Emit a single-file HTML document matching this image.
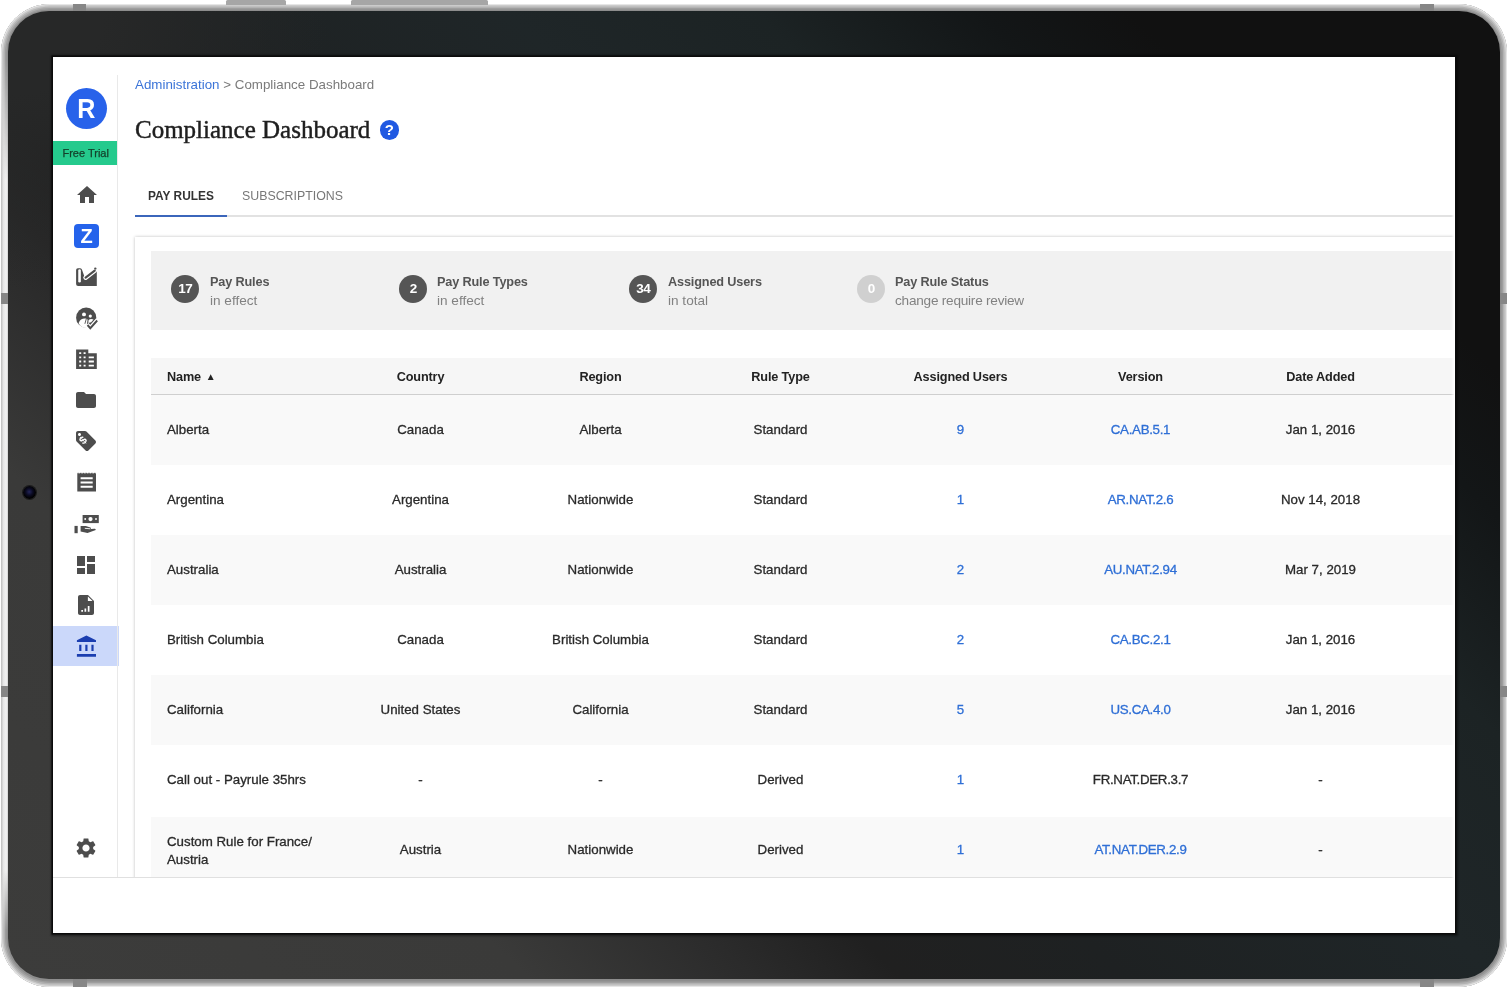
<!DOCTYPE html>
<html lang="en">
<head>
<meta charset="utf-8">
<title>Compliance Dashboard</title>
<style>
*{box-sizing:border-box;margin:0;padding:0}
html,body{width:1507px;height:987px;overflow:hidden;background:#fff}
body{position:relative;font-family:"Liberation Sans",Arial,sans-serif;color:#333}
/* ---------- tablet ---------- */
#frame{position:absolute;left:0.5px;top:3.5px;width:1506px;height:983px;border-radius:49px;background:#8d8d8d;
 box-shadow:inset 0 0 0 1px #e6e6e6,inset 0 0 0 2.5px #cbcbcb,inset 0 0 0 4px #b2b2b2,inset 0 0 0 5.5px #9e9e9e}
#bezel{position:absolute;left:8px;top:10.5px;width:1491.5px;height:968px;border-radius:41px;
 background:radial-gradient(ellipse 320px 280px at 0 0,#272828 0,#272828 30%,rgba(39,40,40,0) 100%),
 linear-gradient(44.24deg,#3c3c3b 0%,#3a3a39 21%,#2b2b2b 30%,#202020 36%,#1e2122 45%,#1f2628 60%,#1c2324 70%,#131617 79%,#111 85%,#111 100%)}
#lring{position:absolute;left:0.5px;top:60px;width:7.5px;height:870px;background:linear-gradient(90deg,#bcbcbc 0,#e6e6e6 35%,#f3f3f3 75%,#d0d0d0 100%);
 -webkit-mask-image:linear-gradient(180deg,transparent 0,#000 120px,#000 calc(100% - 60px),transparent 100%);mask-image:linear-gradient(180deg,transparent 0,#000 120px,#000 calc(100% - 60px),transparent 100%)}
#screen{will-change:transform;position:absolute;left:53px;top:57px;width:1401.5px;height:876.3px;background:#fff;overflow:hidden;box-shadow:0 0 0 1.5px #0b0b0b,0 0 2px 2.5px rgba(0,0,0,.45)}
.notch{position:absolute;background:#868686}
.btn{position:absolute;background:#a6a6a6;top:0;height:4.5px;border-radius:1.5px 1.5px 0 0}
#cam{position:absolute;left:22.5px;top:485.8px;width:13px;height:13px;border-radius:50%;background:radial-gradient(circle at 48% 45%,#23255a 0,#0b0b22 35%,#000 65%);box-shadow:0 0 0 1px #1c1c1c}
/* ---------- app ---------- */
#side{position:absolute;left:0;top:0;width:65px;height:820px;background:#fff}
#side:after{content:"";position:absolute;right:0;top:18px;bottom:0;width:1px;background:#e9e9e9}
#logo{position:absolute;left:12.7px;top:31px;width:41px;height:41px;border-radius:50%;background:#2862ea;color:#fff;font-weight:bold;font-size:28.5px;line-height:41.5px;text-align:center}
#logo span{display:inline-block;transform:scaleX(.88)}
#trial{position:absolute;left:0;top:84.4px;width:65.4px;height:23.8px;background:#25ca8d;color:#14402b;font-size:11px;line-height:24.6px;-webkit-text-stroke:.25px #14402b;text-align:center;white-space:nowrap}
.ico{position:absolute;left:21px;width:24px;height:24px}
.ico svg{display:block;width:24px;height:24px;fill:#4d4d4d;overflow:visible}
#zb{position:absolute;left:21px;top:167.3px;width:25px;height:24px;border-radius:4px;background:#2563eb;color:#fff;font-weight:bold;font-size:20px;line-height:24px;text-align:center}
#active{position:absolute;left:0;top:569px;width:65.5px;height:40px;background:#cbd8fa}
#crumb{position:absolute;left:82px;top:20px;font-size:13.35px;line-height:15px;color:#7b7b7b;white-space:nowrap}
#crumb a{color:#3b74d8;text-decoration:none}
#title{position:absolute;left:82px;top:56.5px;font-family:"Liberation Serif","DejaVu Serif",serif;font-size:25px;line-height:32px;color:#1f1f1f;white-space:nowrap;-webkit-text-stroke:0.45px #1f1f1f}
#help{position:absolute;left:326.7px;top:63px;width:19.5px;height:19.5px;border-radius:50%;background:#2059e2;color:#fff;font-weight:bold;font-size:15px;line-height:19px;text-align:center}
.tab{position:absolute;top:130.6px;line-height:16px;font-size:13.7px;transform-origin:0 50%;white-space:nowrap;text-transform:uppercase}
#tabline{position:absolute;left:82px;top:158.3px;width:1330px;height:1.4px;background:#e2e2e2}
#tabsel{position:absolute;left:82px;top:157.5px;width:91.7px;height:2.8px;background:#3b66bb}
#card{position:absolute;left:82px;top:180.3px;width:1400px;height:760px;background:#fff;box-shadow:0 0 3px rgba(0,0,0,.26)}
#stats{position:absolute;left:16px;top:13.7px;width:1400px;height:79px;background:#f1f1f1}
.num{position:absolute;top:23.6px;width:28px;height:28px;border-radius:50%;background:#555;color:#fff;font-weight:bold;font-size:13.5px;letter-spacing:-.5px;line-height:28px;text-align:center}
.st{position:absolute;top:22.3px;font-size:13.6px;line-height:18.4px;white-space:nowrap;color:#828282}
.st b{color:#555;display:block;font-size:12.7px;letter-spacing:-.15px}
#thead{position:absolute;left:16px;top:120.7px;width:1400px;height:37.5px;background:#f6f6f6;border-bottom:1.3px solid #cfcfcf;font-weight:bold;font-size:12.7px;letter-spacing:-.15px;line-height:38.6px;color:#222}
.row{position:absolute;left:16px;width:1400px;height:70px;font-size:13.3px;color:#2a2a2a;-webkit-text-stroke:.3px}
.row.odd{background:#f9f9f9}
.c{position:absolute;top:0;width:180px;text-align:center;white-space:nowrap}
.row .c{line-height:inherit}
.c0{left:16px;width:200px;text-align:left}
.row .c5{letter-spacing:-.3px}
.c1{left:179.5px}.c2{left:359.5px}.c3{left:539.5px}.c4{left:719.5px}.c5{left:899.5px}.c6{left:1079.5px}
.lnk{color:#2f6fd6}
#rfade{position:absolute;right:0;top:0;width:3.5px;height:100%;background:linear-gradient(90deg,rgba(255,255,255,0),#fff 85%)}
#foot{position:absolute;left:0;top:819.6px;width:1402px;height:58px;background:#fff;border-top:1.5px solid #e0e0e0}
</style>
</head>
<body>
<div id="frame"></div>
<div id="lring"></div>
<div class="btn" style="left:226px;width:60px"></div>
<div class="btn" style="left:351px;width:137px"></div>
<div class="notch" style="left:73px;top:3.5px;width:13px;height:7px"></div>
<div class="notch" style="left:1420px;top:3.5px;width:13.5px;height:7px"></div>
<div class="notch" style="left:73px;top:978.5px;width:13.5px;height:8px"></div>
<div class="notch" style="left:1420px;top:978.5px;width:13.5px;height:8px"></div>
<div class="notch" style="left:0.5px;top:293px;width:7.5px;height:11px"></div>
<div class="notch" style="left:0.5px;top:686px;width:7.5px;height:11px"></div>
<div class="notch" style="left:1499.5px;top:293px;width:7.5px;height:11px"></div>
<div class="notch" style="left:1499.5px;top:686px;width:7.5px;height:11px"></div>
<div id="bezel"></div>
<div id="cam"></div>
<div id="screen">
  <div id="crumb"><a>Administration</a> &gt; Compliance Dashboard</div>
  <div id="title">Compliance Dashboard</div>
  <div id="help">?</div>
  <div class="tab" style="left:95px;color:#333;font-weight:bold;transform:scaleX(.869)">Pay Rules</div>
  <div class="tab" style="left:189px;color:#777;transform:scaleX(.9026)">Subscriptions</div>
  <div id="tabline"></div><div id="tabsel"></div>
  <div id="card">
    <div id="stats">
      <div class="num" style="left:20.3px">17</div><div class="st" style="left:59px"><b>Pay Rules</b>in effect</div>
      <div class="num" style="left:248.3px">2</div><div class="st" style="left:286px"><b>Pay Rule Types</b>in effect</div>
      <div class="num" style="left:478.3px">34</div><div class="st" style="left:517px"><b>Assigned Users</b>in total</div>
      <div class="num" style="left:706.3px;background:#d0d0d0">0</div><div class="st" style="left:744px"><b>Pay Rule Status</b><span style="letter-spacing:-.23px">change require review</span></div>
    </div>
    <div id="thead">
      <div class="c c0">Name <span style="font-size:10px;position:relative;top:-.5px;left:1.5px">&#9650;</span></div>
      <div class="c c1">Country</div><div class="c c2">Region</div><div class="c c3">Rule Type</div>
      <div class="c c4">Assigned Users</div><div class="c c5">Version</div><div class="c c6">Date Added</div>
    </div>
    <div class="row odd" style="top:157.9px;height:69.9px;line-height:70.5px"><div class="c c0">Alberta</div><div class="c c1">Canada</div><div class="c c2">Alberta</div><div class="c c3">Standard</div><div class="c c4 lnk">9</div><div class="c c5 lnk">CA.AB.5.1</div><div class="c c6">Jan 1, 2016</div></div>
    <div class="row" style="top:227.8px;height:70.4px;line-height:70.2px"><div class="c c0">Argentina</div><div class="c c1">Argentina</div><div class="c c2">Nationwide</div><div class="c c3">Standard</div><div class="c c4 lnk">1</div><div class="c c5 lnk">AR.NAT.2.6</div><div class="c c6">Nov 14, 2018</div></div>
    <div class="row odd" style="top:298.2px;height:69.9px;line-height:70.7px"><div class="c c0">Australia</div><div class="c c1">Australia</div><div class="c c2">Nationwide</div><div class="c c3">Standard</div><div class="c c4 lnk">2</div><div class="c c5 lnk">AU.NAT.2.94</div><div class="c c6">Mar 7, 2019</div></div>
    <div class="row" style="top:368.1px;height:69.9px;line-height:69.7px"><div class="c c0">British Columbia</div><div class="c c1">Canada</div><div class="c c2">British Columbia</div><div class="c c3">Standard</div><div class="c c4 lnk">2</div><div class="c c5 lnk">CA.BC.2.1</div><div class="c c6">Jan 1, 2016</div></div>
    <div class="row odd" style="top:438.0px;height:69.4px;line-height:69.0px"><div class="c c0">California</div><div class="c c1">United States</div><div class="c c2">California</div><div class="c c3">Standard</div><div class="c c4 lnk">5</div><div class="c c5 lnk">US.CA.4.0</div><div class="c c6">Jan 1, 2016</div></div>
    <div class="row" style="top:507.4px;height:72.0px;line-height:69.4px"><div class="c c0">Call out - Payrule 35hrs</div><div class="c c1">-</div><div class="c c2">-</div><div class="c c3">Derived</div><div class="c c4 lnk">1</div><div class="c c5">FR.NAT.DER.3.7</div><div class="c c6">-</div></div>
    <div class="row odd" style="top:579.4px;height:66.3px;line-height:65.4px"><div class="c c0" style="line-height:18px;top:16px;white-space:normal;width:160px">Custom Rule for France/ Austria</div><div class="c c1">Austria</div><div class="c c2">Nationwide</div><div class="c c3">Derived</div><div class="c c4 lnk">1</div><div class="c c5 lnk">AT.NAT.DER.2.9</div><div class="c c6">-</div></div>
  </div>
  <div id="side">
    <div id="logo"><span>R</span></div>
    <div id="trial">Free Trial</div>
    <div id="active"></div>
    <div class="ico" style="top:126.4px;left:21.5px"><svg viewBox="0 0 24 24"><path d="M10 20v-6h4v6h5v-8h3L12 3 2 12h3v8z"/></svg></div>
    <div id="zb">Z</div>
    <div class="ico" style="top:208.3px;left:21.0px"><svg viewBox="0 0 24 24"><path d="M2.1 5.1Q2.1 3.3 3.9 3.3H6.2Q7.7 3.3 8 4.800L10.4 11.5 22.8 3.500V21H4.100Q2.1 21 2.1 19z"/><path d="M5.550 5.600V16.3" stroke="#fff" stroke-width="2.6" stroke-linecap="round" fill="none"/><path d="M11.6 12.6L20.9 5.5" stroke="#fff" stroke-width="4.6" stroke-linecap="round" fill="none"/><path d="M11.6 12.6L20.7 5.6" stroke="#4d4d4d" stroke-width="2.2" stroke-linecap="round" fill="none"/><circle cx="21.3" cy="3.6" r="1.150"/></svg></div>
    <div class="ico" style="top:249.2px;left:21.0px"><svg viewBox="0 0 24 24"><circle cx="12.2" cy="11.7" r="10.1"/><circle cx="10" cy="8.4" r="1.95" fill="#fff"/><circle cx="16.3" cy="10.1" r="1.6" fill="#fff"/><path d="M4.6 17.2C5.6 13.8 8.2 12.4 10.6 12.400c1.3 0 2.3.5 3 1.200L12.5 22C9 21.8 6 20.2 4.6 17.200z" fill="#fff"/><path d="M14.6 14c1.2-1.3 3.4-1.4 4.9-.5L17.2 16.200l-2.9.8z" fill="#fff"/><path d="M12.3 12.800L10.9 17.8" stroke="#4d4d4d" stroke-width=".9" fill="none"/><path d="M12.6 18.600l3.7 4.2 7.6-8.6" stroke="#fff" stroke-width="5.2" fill="none"/><path d="M13.5 19l2.8 3.2 6.9-7.7" stroke="#4d4d4d" stroke-width="1.9" fill="none"/></svg></div>
    <div class="ico" style="top:290.2px;left:21.0px"><svg viewBox="0 0 24 24"><path fill-rule="evenodd" d="M2.1 2.400H14.300V6.200H22.800V22.100H2.100zM5.2 5.3h2v1.800h-2zM5.2 9.4h2v1.800h-2zM5.2 13.6h2v1.800h-2zM5.2 17.8h2v1.800h-2zM9.6 5.3h2v1.800h-2zM9.6 9.4h2v1.800h-2zM9.6 13.6h2v1.800h-2zM9.6 17.8h2v1.800h-2zM14.7 9.4h5.200v1.800h-5.200zM14.7 13.6h5.200v1.800h-5.200zM14.7 17.8h5.200v1.800h-5.200z"/></svg></div>
    <div class="ico" style="top:331.3px;left:21.4px"><svg viewBox="0 0 24 24"><path d="M10 4H4c-1.1 0-1.990.9-1.990 2L2 18c0 1.1.9 2 2 2h16c1.1 0 2-.9 2-2V8c0-1.1-.9-2-2-2h-8l-2-2z"/></svg></div>
    <div class="ico" style="top:372.1px;left:21.4px"><svg viewBox="0 0 24 24"><path d="M21.410 11.580l-9-9C12.050 2.220 11.550 2 11 2H4c-1.1 0-2 .9-2 2v7c0 .55.22 1.050.59 1.420l9 9c.36.36.86.58 1.410.58.55 0 1.050-.22 1.410-.59l7-7c.37-.36.59-.86.59-1.410 0-.55-.23-1.060-.59-1.420zM5.5 7C4.670 7 4 6.330 4 5.500S4.670 4 5.5 4 7 4.670 7 5.5 6.330 7 5.5 7z"/><text x="0" y="0" transform="translate(9.4 15.9) rotate(-45)" font-family="Liberation Sans,Arial,sans-serif" font-weight="bold" font-size="11" fill="#fff">$</text></svg></div>
    <div class="ico" style="top:413.1px;left:21.0px"><svg viewBox="0 0 24 24"><path d="M3.3 21.600V2.600L4.08 3.7 L4.86 2.6 L5.64 3.7 L6.42 2.6 L7.20 3.7 L7.97 2.6 L8.75 3.7 L9.53 2.6 L10.31 3.7 L11.09 2.6 L11.87 3.7 L12.65 2.6 L13.43 3.7 L14.21 2.6 L14.99 3.7 L15.77 2.6 L16.55 3.7 L17.32 2.6 L18.10 3.7 L18.88 2.6 L19.66 3.7 L20.44 2.6 L21.22 3.7 L22.00 2.6V21.600z"/><path d="M6.6 7.200h12.100v2h-12.100zM6.6 11.400h12.100v2h-12.100zM6.6 15.700h12.100v2h-12.100z" fill="#fff"/></svg></div>
    <div class="ico" style="top:454.0px;left:21.0px"><svg viewBox="0 0 24 24"><path d="M8.6 4h16.200v8.100H8.600z"/><circle cx="16.5" cy="8.050" r="2.1" fill="#fff"/><circle cx="11.2" cy="8.050" r=".95" fill="#fff"/><circle cx="22" cy="8.050" r=".95" fill="#fff"/><path d="M.5 14.900h3.200v7.300H.5z"/><path d="M6.6 14.900h5.200l4.6 1.700c.6.3.8.8.6 1.300l3.4-.1c.9 0 1.4.6 1.4 1.300l-8.3 2.9-6.9-1.600z"/><path d="M10.8 17.300l5.6.5" stroke="#fff" stroke-width=".9" fill="none"/></svg></div>
    <div class="ico" style="top:495.6px;left:21.4px"><svg viewBox="0 0 24 24"><path d="M3 13h8V3H3v10zm0 8h8v-6H3v6zm10 0h8V11h-8v10zm0-18v6h8V3h-8z"/></svg></div>
    <div class="ico" style="top:536.0px;left:21.4px"><svg viewBox="0 0 24 24"><path d="M14 2H6c-1.1 0-2 .9-2 2v16c0 1.1.9 2 2 2h12c1.1 0 2-.9 2-2V8l-6-6z"/><path d="M13.9 3.400L18.6 8.100H13.900z" fill="#fff"/><path d="M7.3 17h1.700v1.700H7.300zM10.5 15.400h1.700v3.300h-1.700zM13.8 13h1.700v5.700h-1.700z" fill="#fff"/></svg></div>
    <div class="ico" style="top:576.9px;left:21.0px"><svg viewBox="0 0 24 24"><path fill="#1b3eb0" d="M12.4 1.400L2.9 6.200V8H22V6.200zM5.2 10.700h2.200v6.400H5.200zM11.3 10.700h2.200v6.400h-2.200zM17.4 10.700h2.200v6.400h-2.200zM2.9 20H22v2.800H2.900z"/></svg></div>
    <div class="ico" style="top:779px"><svg viewBox="0 0 24 24"><path d="M19.14 12.94c.04-.3.06-.61.06-.94 0-.32-.02-.64-.07-.94l2.03-1.58c.18-.14.23-.41.12-.61l-1.92-3.32c-.12-.22-.37-.29-.59-.22l-2.39.96c-.5-.38-1.03-.7-1.62-.94l-.36-2.54c-.04-.24-.24-.41-.48-.41h-3.840c-.24 0-.43.17-.47.41l-.36 2.54c-.59.24-1.13.57-1.62.94l-2.39-.96c-.22-.08-.47 0-.59.22L2.74 8.870c-.12.21-.08.47.12.61l2.03 1.58c-.05.3-.09.63-.09.94s.02.64.07.94l-2.03 1.58c-.18.14-.23.41-.12.61l1.92 3.320c.12.22.37.29.59.22l2.39-.96c.5.38 1.03.7 1.62.94l.36 2.54c.05.24.24.41.48.41h3.840c.24 0 .44-.17.47-.41l.36-2.54c.59-.24 1.13-.56 1.62-.94l2.39.96c.22.08.47 0 .59-.22l1.92-3.320c.12-.22.07-.47-.12-.61l-2.01-1.58zM12 15.600c-1.980 0-3.600-1.620-3.600-3.600s1.620-3.600 3.600-3.600 3.600 1.620 3.600 3.600-1.620 3.600-3.600 3.600z"/></svg></div>
  </div>
  <div id="foot"></div>
  <div id="rfade"></div>
</div>
</body>
</html>
